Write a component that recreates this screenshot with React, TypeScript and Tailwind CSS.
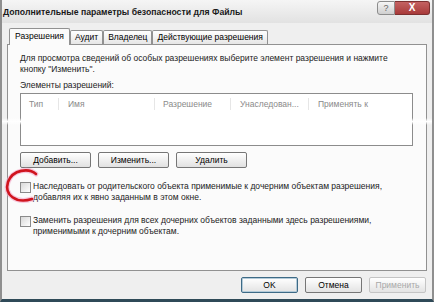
const font = { fontFamily: '"Liberation Sans", Arial, sans-serif' }

function XpButton({ label, disabled, focused }: { label: string; disabled?: boolean; focused?: boolean }) {
  return (
    <button
      className={
        'h-[16px] w-[57px] rounded-[2px] border text-[8.5px] leading-none bg-gradient-to-b from-white to-[#e3e3e3] ' +
        (focused ? 'border-[#3d6a86] shadow-[inset_0_0_0_1px_#b4cbd9]' : 'border-[#767676]') +
        (disabled ? ' border-[#c4c4c4] text-[#a8a8a8]' : ' text-black')
      }
    >
      {label}
    </button>
  )
}

function PanelButton({ label }: { label: string }) {
  return (
    <button className="h-[16px] w-[71px] rounded-[2px] border border-[#767676] bg-gradient-to-b from-white to-[#e1e1e1] text-[8.5px] leading-none text-black">
      {label}
    </button>
  )
}

function Checkbox() {
  return <span className="mt-[1px] h-[11px] w-[11px] shrink-0 border border-[#8a8a8a] bg-gradient-to-br from-[#d8d8d8] to-white" />
}

export default function App() {
  return (
    <div
      className="relative flex h-[302px] w-[434px] flex-col overflow-hidden border-x-[2px] border-b-[3px] border-x-[#8f8f8f] border-b-[#2f4a58] bg-[#efefef] text-[8.5px] text-black"
      style={font}
    >
      {/* title bar */}
      <div className="flex h-[23px] shrink-0 items-start justify-between bg-gradient-to-b from-[#f5f5f5] to-[#e2e2e2] pl-[1px] pr-[2px]">
        <span className="mt-[8px] text-[8.7px] font-bold leading-none text-[#1a1a1a]">
          Дополнительные параметры безопасности для Файлы
        </span>
        <div className="mt-[1px] flex">
          <span className="flex h-[14px] w-[18px] items-center justify-center rounded-l-[3px] border border-[#8c8c8c] bg-gradient-to-b from-[#f6f6f6] to-[#cfcfcf] text-[9px] leading-none text-[#666]">
            ?
          </span>
          <span className="flex h-[14px] w-[35px] items-center justify-center rounded-r-[3px] border border-l-0 border-[#7c3030] bg-gradient-to-b from-[#c46262] to-[#a83a3a] text-[10px] font-bold leading-none text-white">
            X
          </span>
        </div>
      </div>

      <div className="flex flex-1 flex-col pl-[5px] pr-[5px]">
        {/* tabs */}
        <div className="relative z-10 mt-[5px] flex items-end pl-[2px]">
          <div className="-mb-px flex h-[17px] items-start rounded-t-[2px] border border-b-0 border-[#919191] bg-[#fbfbfb] px-[5px] pt-[3px] leading-none">Разрешения</div>
          <div className="flex h-[14px] items-start rounded-t-[2px] border border-b-0 border-[#919191] bg-gradient-to-b from-white to-[#e6e6e6] px-[4px] pt-[2px] leading-none">Аудит</div>
          <div className="flex h-[14px] items-start rounded-t-[2px] border border-b-0 border-[#919191] bg-gradient-to-b from-white to-[#e6e6e6] px-[4px] pt-[2px] leading-none">Владелец</div>
          <div className="flex h-[14px] items-start rounded-t-[2px] border border-b-0 border-[#919191] bg-gradient-to-b from-white to-[#e6e6e6] px-[4px] pt-[2px] leading-none">Действующие разрешения</div>
        </div>

        {/* panel */}
        <div className="flex h-[227px] flex-col border border-[#919191] bg-[#fbfbfb] pl-[12px] pr-[13px] pt-[8px]">
          <p className="leading-[11px] text-[#222]">
            Для просмотра сведений об особых разрешениях выберите элемент разрешения и нажмите
            кнопку "Изменить".
          </p>
          <p className="mt-[5px] leading-[11px] text-[#222]">Элементы разрешений:</p>

          <div className="mt-[2px] h-[53px] border border-[#8c8c8c] bg-white">
            <div className="flex h-[20px] items-center text-[#8a8a8a]">
              <span className="w-[38px] border-r border-[#e6e6e6] pl-[8px]">Тип</span>
              <span className="w-[96px] border-r border-[#e6e6e6] pl-[9px]">Имя</span>
              <span className="w-[76px] border-r border-[#e6e6e6] pl-[8px]">Разрешение</span>
              <span className="w-[78px] border-r border-[#e6e6e6] pl-[9px]">Унаследован...</span>
              <span className="pl-[9px]">Применять к</span>
            </div>
          </div>

          <div className="mt-[6px] flex gap-[7px]">
            <PanelButton label="Добавить..." />
            <PanelButton label="Изменить..." />
            <PanelButton label="Удалить" />
          </div>

          <div className="mt-[13px] flex gap-[2px]">
            <Checkbox />
            <p className="leading-[11px] text-[#222]">
              Наследовать от родительского объекта применимые к дочерним объектам разрешения,
              <br />
              добавляя их к явно заданным в этом окне.
            </p>
          </div>
          <div className="mt-[12px] flex gap-[2px]">
            <Checkbox />
            <p className="leading-[11px] text-[#222]">
              Заменить разрешения для всех дочерних объектов заданными здесь разрешениями,
              <br />
              применимыми к дочерним объектам.
            </p>
          </div>
        </div>

        {/* bottom buttons */}
        <div className="mt-[6px] flex justify-end gap-[7px] pr-[1px]">
          <XpButton label="OK" focused />
          <XpButton label="Отмена" />
          <XpButton label="Применить" disabled />
        </div>
      </div>

      {/* torn edge highlight across the list */}
      <div className="pointer-events-none absolute left-0 right-0 top-[118px] h-[7px] bg-gradient-to-b from-transparent via-white to-transparent" />

      {/* red annotation circle */}
      <svg className="pointer-events-none absolute left-0 top-[166px]" width="42" height="40" viewBox="0 0 42 40">
        <path d="M34 8 C27 2 11 3 6 16 C2 29 14 38 30 33" fill="none" stroke="#f4a6c8" strokeWidth="5" strokeLinecap="round" opacity="0.6" />
        <path d="M34 8 C27 2 11 3 6 16 C2 29 14 38 30 33" fill="none" stroke="#d0141e" strokeWidth="2.6" strokeLinecap="round" />
      </svg>
    </div>
  )
}
